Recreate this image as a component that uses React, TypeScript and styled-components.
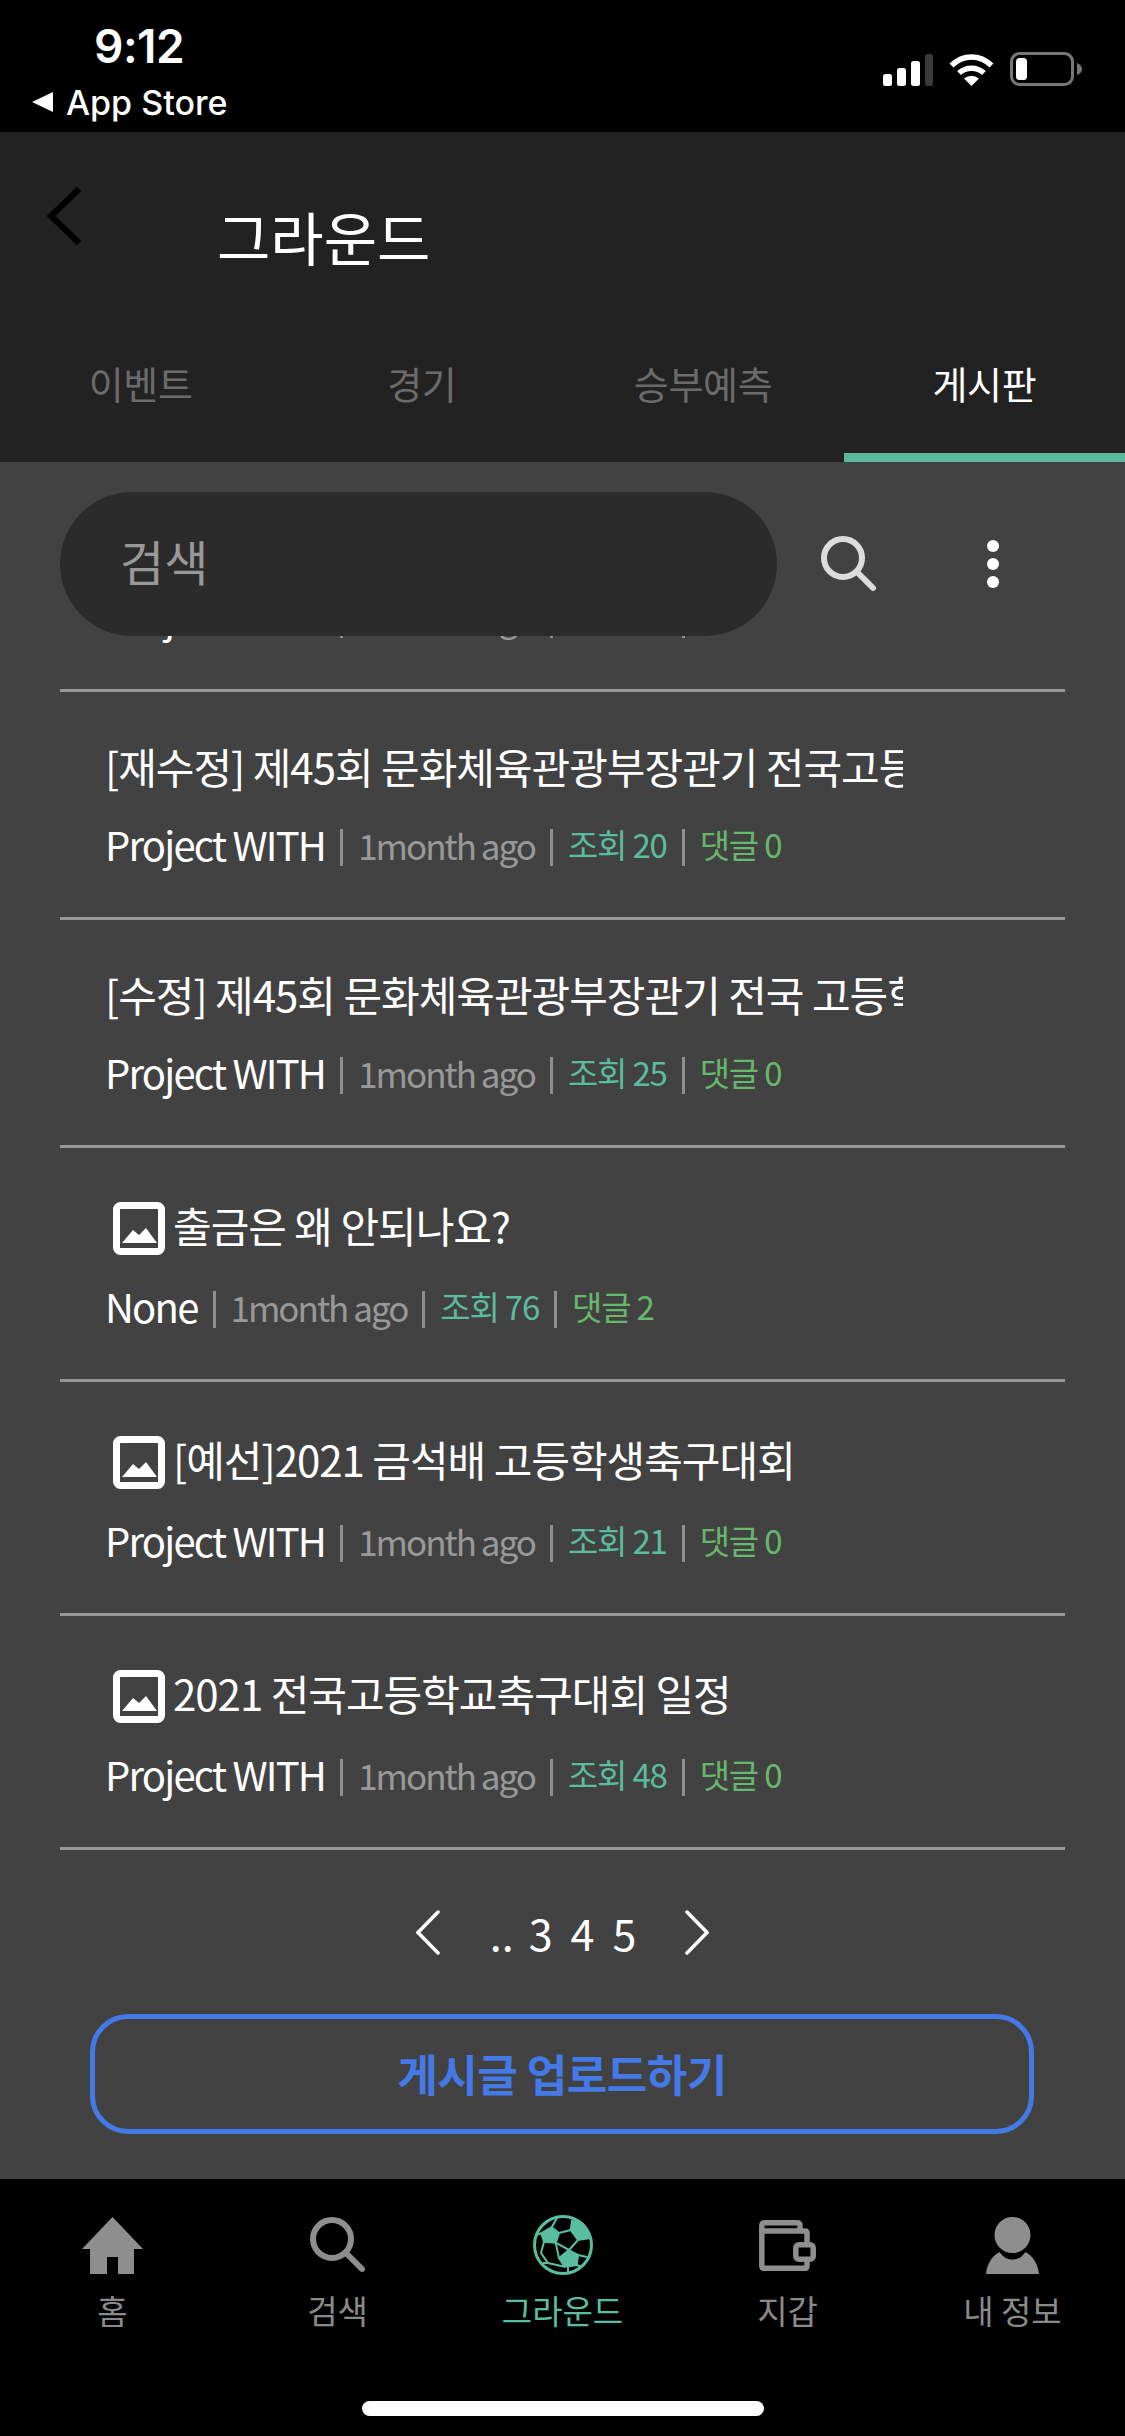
import { FC } from "react";
import styled, { createGlobalStyle } from "styled-components";

type Post = {
  title: string;
  author: string;
  views: number;
  comments: number;
  hasImage?: boolean;
};

const posts: Post[] = [
  { title: "[수정] 2021 전국고등학교축구대회 안내", author: "Project WITH", views: 31, comments: 0 },
  { title: "[재수정] 제45회 문화체육관광부장관기 전국고등학교 축구대회", author: "Project WITH", views: 20, comments: 0 },
  { title: "[수정] 제45회 문화체육관광부장관기 전국 고등학교 축구대회", author: "Project WITH", views: 25, comments: 0 },
  { title: "출금은 왜 안되나요?", author: "None", views: 76, comments: 2, hasImage: true },
  { title: "[예선]2021 금석배 고등학생축구대회", author: "Project WITH", views: 21, comments: 0, hasImage: true },
  { title: "2021 전국고등학교축구대회 일정", author: "Project WITH", views: 48, comments: 0, hasImage: true },
];

const tabs = ["이벤트", "경기", "승부예측", "게시판"];

const SearchIcon: FC<{ color: string }> = ({ color }) => (
  <svg width="56" height="56" viewBox="0 0 56 56" fill="none" stroke={color} strokeWidth="6" strokeLinecap="round">
    <circle cx="22" cy="22" r="19" />
    <line x1="36" y1="36" x2="52" y2="52" />
  </svg>
);

const HomeIcon = () => (
  <svg width="61" height="57" viewBox="0 0 61 57" fill="#8e8e8e">
    <path d="M30.5 0 L61 32 H52 V57 H36 V40 H25 V57 H8 V32 H0 Z" />
  </svg>
);

const BallIcon = () => (
  <svg width="60" height="60" viewBox="0 0 60 60" fill="#5bbd9f" stroke="#5bbd9f" strokeWidth="2">
    <circle cx="30" cy="30" r="28.5" fill="#000" strokeWidth="3" />
    <polygon points="18.7,12.3 26,18 22.7,27.7 11,26.7 8.3,18.3" />
    <polygon points="36,35 45,40 43.7,50 31.7,51.7 26,43.3" />
    <polygon points="39,5.7 50,9 56,23.3 45,25 37.7,15" />
    <path
      fill="none"
      d="M18.7 12.3 L24 3 M26 18 L37.7 15 M45 25 L36 35 M22.7 27.7 L36 35 M22.7 27.7 L26 43.3 M11 26.7 L8 38 L15 48 L31.7 51.7 M8.3 18.3 L3 20 M45 40 L54 42 M43.7 50 L49 52 M35 52 L35 58 M15 48 L10 48"
    />
  </svg>
);

const WalletIcon = () => (
  <svg width="57" height="51" viewBox="0 0 57 51" fill="none" stroke="#8e8e8e" strokeWidth="5.5" strokeLinejoin="round">
    <path d="M2.8 11 V6 Q2.8 2.8 6 2.8 H38 Q41 2.8 41 6 V11" />
    <path d="M2.8 11 H46 Q48 11 48 13 V24 M48 39 V46 Q48 48.2 46 48.2 H5 Q2.8 48.2 2.8 46 V11" />
    <rect x="36.8" y="24.8" width="17.4" height="14.4" rx="3" />
  </svg>
);

const UserIcon = () => (
  <svg width="53" height="57" viewBox="0 0 53 57" fill="#8e8e8e">
    <circle cx="26.5" cy="18" r="18" />
    <path d="M0 57 C1 47 6 39 13.5 35 C17 40 21 42.5 26.5 42.5 C32 42.5 36 40 39.5 35 C47 39 52 47 53 57 Z" />
  </svg>
);

const navItems = [
  { label: "홈", icon: <HomeIcon /> },
  { label: "검색", icon: <SearchIcon color="#8e8e8e" /> },
  { label: "그라운드", icon: <BallIcon />, active: true },
  { label: "지갑", icon: <WalletIcon /> },
  { label: "내 정보", icon: <UserIcon /> },
];

const ImageIcon = () => (
  <ImageGlyph width="52" height="53" viewBox="0 0 52 53">
    <rect x="3.5" y="3.5" width="45" height="46" rx="4" fill="none" stroke="#fff" strokeWidth="7" />
    <path d="M9 41 L20 28 L26 33 L33 26 L44 41 Z" fill="#fff" />
  </ImageGlyph>
);

const Chevron: FC<{ flip?: boolean }> = ({ flip }) => (
  <PagerArrow $flip={flip} width="24" height="45" viewBox="0 0 24 45" fill="none" stroke="#fff" strokeWidth="3.5" strokeLinecap="round">
    <path d="M22 2 L2 22.5 L22 43" />
  </PagerArrow>
);

const App = () => (
  <Page>
    <GlobalStyle />
    <StatusBar>
      <StatusLeft>
        <Time>9:12</Time>
        <BackToStore>
          <StoreArrow />
          App Store
        </BackToStore>
      </StatusLeft>
      <StatusRight>
        <svg width="50" height="32" viewBox="0 0 50 32">
          <rect x="0" y="20" width="9" height="12" rx="2.5" fill="#fff" />
          <rect x="14" y="14" width="9" height="18" rx="2.5" fill="#fff" />
          <rect x="28" y="7" width="9" height="25" rx="2.5" fill="#fff" />
          <rect x="42" y="0" width="8" height="32" rx="2.5" fill="#3a3a3a" />
        </svg>
        <svg width="45" height="33" viewBox="0 0 45 33" fill="none" stroke="#fff" strokeWidth="5.5">
          <path d="M2.5 12.5 C14 1 31 1 42.5 12.5" />
          <path d="M10 20 C17 13.5 28 13.5 35 20" />
          <path d="M22.5 33 L15 25.5 Q22.5 20 30 25.5 Z" fill="#fff" stroke="none" />
        </svg>
        <svg width="72" height="34" viewBox="0 0 72 34">
          <rect x="1.5" y="1.5" width="61" height="31" rx="8" fill="none" stroke="#777" strokeWidth="3" />
          <rect x="6" y="6" width="11" height="22" rx="3.5" fill="#fff" />
          <path d="M67 11 Q72 13 72 17 Q72 21 67 23 Z" fill="#777" />
        </svg>
      </StatusRight>
    </StatusBar>

    <Header>
      <TitleRow>
        <BackIcon width="36" height="58" viewBox="0 0 36 58" fill="none" stroke="#000" strokeWidth="6">
          <path d="M33 2 L5 29 L33 56" />
        </BackIcon>
        <PageTitle>그라운드</PageTitle>
      </TitleRow>
      <Tabs>
        {tabs.map((tab, i) => (
          <Tab key={tab} $active={i === 3}>
            {tab}
          </Tab>
        ))}
      </Tabs>
    </Header>

    <Content>
      <SearchRow>
        <SearchBox>
          <Placeholder>검색</Placeholder>
        </SearchBox>
        <SearchButton>
          <SearchIcon color="#dcdcdc" />
        </SearchButton>
        <MoreButton>
          <i />
          <i />
          <i />
        </MoreButton>
      </SearchRow>

      <List>
        {posts.map((post) => (
          <Row key={post.title}>
            <RowTitle $hasImage={post.hasImage}>
              {post.hasImage && <ImageIcon />}
              <TitleText $hasImage={post.hasImage}>{post.title}</TitleText>
            </RowTitle>
            <Meta>
              <Author>{post.author}</Author>
              <Sep />
              <Ago>1month ago</Ago>
              <Sep />
              <Views>조회 {post.views}</Views>
              <Sep />
              <Comments>댓글 {post.comments}</Comments>
            </Meta>
          </Row>
        ))}
      </List>

      <Pager>
        <Chevron />
        <PageDots>..</PageDots>
        <PageNum>3</PageNum>
        <PageNum>4</PageNum>
        <PageNum>5</PageNum>
        <Chevron flip />
      </Pager>

      <UploadButton>게시글 업로드하기</UploadButton>
    </Content>

    <BottomNav>
      <NavGrid>
        {navItems.map((item) => (
          <NavItem key={item.label} $active={item.active}>
            <NavIcon>{item.icon}</NavIcon>
            {item.label}
          </NavItem>
        ))}
      </NavGrid>
      <HomeIndicator />
    </BottomNav>
  </Page>
);

export default App;

const GlobalStyle = createGlobalStyle`
  html, body {
    margin: 0;
    padding: 0;
    background: #000;
  }
  * {
    box-sizing: border-box;
  }
`;

const Page = styled.div`
  width: 1125px;
  height: 2436px;
  display: flex;
  flex-direction: column;
  overflow: hidden;
  background: #424242;
  font-family: "Noto Sans CJK KR", "Noto Sans", sans-serif;
  color: #fff;
`;

const StatusBar = styled.div`
  height: 132px;
  flex: none;
  display: flex;
  justify-content: space-between;
  background: #000;
  padding: 18px 43px 0 32px;
`;

const StatusLeft = styled.div`
  display: flex;
  flex-direction: column;
  font-family: Inter, "Liberation Sans", sans-serif;
`;

const Time = styled.div`
  height: 56px;
  line-height: 56px;
  padding-left: 62px;
  font-size: 46px;
  font-weight: 600;
  letter-spacing: -0.5px;
`;

const BackToStore = styled.div`
  margin-top: 8px;
  height: 40px;
  display: flex;
  align-items: center;
  gap: 13px;
  font-size: 34px;
  font-weight: 500;
`;

const StoreArrow = styled.span`
  width: 0;
  height: 0;
  border-style: solid;
  border-width: 10px 21px 10px 0;
  border-color: transparent #fff transparent transparent;
`;

const StatusRight = styled.div`
  display: flex;
  align-items: flex-end;
  gap: 16px;
  height: 68px;
`;

const Header = styled.header`
  height: 330px;
  flex: none;
  display: flex;
  flex-direction: column;
  background: #222;
`;

const TitleRow = styled.div`
  height: 180px;
  display: flex;
  align-items: flex-start;
  padding-left: 46px;
`;

const BackIcon = styled.svg`
  margin-top: 55px;
`;

const PageTitle = styled.h1`
  margin: 64px 0 0 135px;
  font-size: 58px;
  line-height: 80px;
  font-weight: 400;
`;

const Tabs = styled.div`
  height: 150px;
  display: grid;
  grid-template-columns: repeat(4, 1fr);
`;

const Tab = styled.div<{ $active?: boolean }>`
  display: flex;
  align-items: center;
  justify-content: center;
  font-size: 38px;
  letter-spacing: -0.3px;
  color: ${({ $active }) => ($active ? "#fff" : "#6b6b6b")};
  border-bottom: 9px solid ${({ $active }) => ($active ? "#5bb79a" : "transparent")};
`;

const Content = styled.main`
  flex: 1;
  min-height: 0;
  display: flex;
  flex-direction: column;
`;

const SearchRow = styled.div`
  height: 174px;
  flex: none;
  padding: 30px 0 0 60px;
  display: flex;
  align-items: center;
`;

const SearchBox = styled.div`
  width: 717px;
  height: 144px;
  border-radius: 72px;
  background: #2b2b2b;
  display: flex;
  align-items: center;
  padding-left: 60px;
`;

const Placeholder = styled.span`
  font-size: 48px;
  line-height: 60px;
  padding-bottom: 8px;
  color: #999;
`;

const SearchButton = styled.div`
  margin-left: 44px;
  display: flex;
`;

const MoreButton = styled.div`
  margin-left: 110px;
  display: flex;
  flex-direction: column;
  gap: 6px;

  i {
    display: block;
    width: 12px;
    height: 12px;
    border-radius: 50%;
    background: #fff;
  }
`;

/* scrolled list: the first post has gone up under the search row */
const List = styled.div`
  flex: none;
  margin: 0 60px;
  overflow: hidden;
  display: flex;
  flex-direction: column;
`;

const Row = styled.div`
  flex: none;
  padding: 47px 44px 40px 45px;
  border-bottom: 3px solid #979797;
  display: flex;
  flex-direction: column;

  &:first-child {
    margin-top: -172px;
  }
`;

const RowTitle = styled.div<{ $hasImage?: boolean }>`
  height: ${({ $hasImage }) => ($hasImage ? "66px" : "60px")};
  margin-bottom: 18px;
  display: flex;
  align-items: center;
`;

const ImageGlyph = styled.svg`
  flex: none;
  margin: 0 8px 0 8px;
`;

const TitleText = styled.div<{ $hasImage?: boolean }>`
  max-width: ${({ $hasImage }) => ($hasImage ? "none" : "798px")};
  overflow: hidden;
  white-space: nowrap;
  font-size: 42px;
  line-height: 60px;
  letter-spacing: -1px;
  margin-top: -6px;
`;

const Meta = styled.div`
  height: 60px;
  padding-bottom: 6px;
  display: flex;
  align-items: center;
  gap: 15px;
  white-space: nowrap;
`;

const Author = styled.span`
  font-size: 40px;
  letter-spacing: -1.8px;
  color: #fff;
`;

const Sep = styled.span`
  width: 3px;
  height: 37px;
  margin-top: 6px;
  background: #8f8f8f;
`;

const Ago = styled.span`
  font-size: 35px;
  letter-spacing: -2px;
  color: #999;
`;

const Views = styled.span`
  font-size: 33px;
  letter-spacing: -1.2px;
  color: #5bbd9f;
`;

const Comments = styled.span`
  font-size: 33px;
  letter-spacing: -1.2px;
  color: #66b86a;
`;

const Pager = styled.div`
  height: 164px;
  flex: none;
  display: flex;
  align-items: center;
  justify-content: center;
  gap: 18px;
`;

const PagerArrow = styled.svg<{ $flip?: boolean }>`
  transform: ${({ $flip }) => ($flip ? "scaleX(-1)" : "none")};
  margin: ${({ $flip }) => ($flip ? "0 0 0 31px" : "0 32px 0 0")};
`;

const PageDots = styled.span`
  font-size: 43px;
  line-height: 60px;
  margin-right: -3px;
`;

const PageNum = styled.span`
  font-size: 43px;
  line-height: 60px;
`;

const UploadButton = styled.div`
  height: 120px;
  flex: none;
  margin: 0 91px 0 90px;
  padding-bottom: 3px;
  border: 5px solid #4479e8;
  border-radius: 38px;
  display: flex;
  align-items: center;
  justify-content: center;
  font-size: 44px;
  letter-spacing: -0.5px;
  font-weight: 700;
  color: #4479e8;
`;

const BottomNav = styled.nav`
  height: 257px;
  flex: none;
  background: #000;
  padding-top: 36px;
  display: flex;
  flex-direction: column;
`;

const NavGrid = styled.div`
  display: grid;
  grid-template-columns: repeat(5, 1fr);
`;

const NavItem = styled.div<{ $active?: boolean }>`
  display: flex;
  flex-direction: column;
  align-items: center;
  font-size: 33px;
  line-height: 50px;
  color: ${({ $active }) => ($active ? "#5bbd9f" : "#8a8a8a")};
`;

const NavIcon = styled.div`
  height: 60px;
  margin-bottom: 10px;
  display: flex;
  align-items: center;
  justify-content: center;
`;

const HomeIndicator = styled.div`
  width: 402px;
  height: 15px;
  margin: 66px auto 0;
  border-radius: 8px;
  background: #fff;
`;
